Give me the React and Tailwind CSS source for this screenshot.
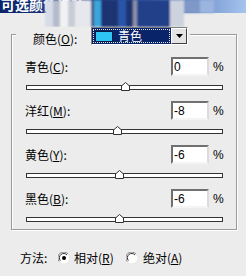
import React from "react";

const rows = [
  { label: "青色", key: "C", value: "0", v: 0 },
  { label: "洋红", key: "M", value: "-8", v: -8 },
  { label: "黄色", key: "Y", value: "-6", v: -6 },
  { label: "黑色", key: "B", value: "-6", v: -6 },
];

function Thumb() {
  return (
    <svg width="9" height="9" viewBox="0 0 9 9">
      <path d="M0.5 8.5 V4 L4.5 0.5 L8.5 4 V8.5 Z" fill="#fff" stroke="#303030" strokeWidth="1" />
    </svg>
  );
}

function Radio({ checked }) {
  return (
    <svg width="12" height="12" viewBox="0 0 12 12" className="shrink-0">
      <circle cx="6" cy="6" r="5.5" fill="#fff" />
      <path d="M10 2 A5.5 5.5 0 0 0 1.2 9.5" fill="none" stroke="#808080" strokeWidth="1" />
      <path d="M9 3 A4.2 4.2 0 0 0 2.4 8.6" fill="none" stroke="#303030" strokeWidth="1" />
      <path d="M10.4 2.6 A5.5 5.5 0 0 1 2 10.6" fill="none" stroke="#e6e6e6" strokeWidth="1" />
      {checked && <circle cx="6" cy="6" r="2" fill="#000" />}
    </svg>
  );
}

function Slider({ v }) {
  const left = ((v + 100) / 200) * 197 - 4.5;
  return (
    <div className="relative ml-[14px] mt-[9px] h-[5px] w-[197px] border border-[#333] bg-white">
      <div className="absolute top-[-4px]" style={{ left: `${left}px` }}>
        <Thumb />
      </div>
    </div>
  );
}

export default function App() {
  return (
    <div className="relative h-[276px] w-[246px] overflow-hidden bg-[#ececec] font-['Noto_Sans_CJK_SC',sans-serif] text-[12px] leading-[14px] text-black">
      {/* title bar */}
      <div className="h-[13px] overflow-hidden bg-gradient-to-r from-[#0a246a] via-[#2a4a98] to-[#a6c4ee]">
        <div className="-mt-[4px] whitespace-nowrap pl-[1px] text-[14px] font-bold leading-[17px] text-white">可选颜色选项</div>
      </div>
      {/* blurred artefact */}
      <svg className="absolute left-0 top-0" width="246" height="28" viewBox="0 0 246 28">
        <defs>
          <filter id="bl" x="-10%" y="-30%" width="120%" height="160%">
            <feGaussianBlur stdDeviation="1.3" />
          </filter>
        </defs>
        <g filter="url(#bl)">
          <rect x="45" y="0" width="8" height="27" fill="#d8dce8" />
          <rect x="53" y="0" width="7" height="27" fill="#b4bccc" />
          <rect x="60" y="0" width="8" height="27" fill="#f2f2f4" />
          <rect x="68" y="0" width="7" height="27" fill="#c8ccd6" />
          <rect x="75" y="0" width="16" height="27" fill="#e6e8ee" />
          <rect x="91" y="0" width="3" height="27" fill="#405080" />
          <rect x="94" y="0" width="7" height="27" fill="#3aa6dc" />
          <rect x="101" y="0" width="6" height="27" fill="#1e3272" />
          <rect x="107" y="0" width="26" height="27" fill="#1c3472" />
          <rect x="118" y="0" width="8" height="27" fill="#2a55a8" />
          <rect x="133" y="0" width="4" height="27" fill="#8a92a8" />
          <rect x="137" y="0" width="33" height="27" fill="#22408a" />
          <rect x="170" y="0" width="14" height="27" fill="#cdd3de" />
          <rect x="184" y="0" width="16" height="13" fill="#7f98c8" />
          <rect x="200" y="0" width="14" height="13" fill="#9cb4e0" />
        </g>
      </svg>

      {/* group box */}
      <div className="relative ml-[11px] mt-[21px] w-[226px] border border-[#9a9a9a] pb-[7px] shadow-[inset_1px_1px_0_#fff,1px_1px_0_#fff]">
        <div className="-mt-[8px] ml-[4px] flex h-[17px] w-[174px] items-start bg-[#ececec]">
          <div className="w-[75px] shrink-0 whitespace-nowrap pl-[17px] pt-[5px]">
            颜色(<span className="underline">O</span>):
          </div>
          <div className="flex h-[18px] w-[97px] shrink-0 border border-t-[#808080] border-l-[#808080] border-b-[#fff] border-r-[#fff] bg-white">
            <div className="flex flex-1 items-center bg-[#0a246a] p-[1px]">
              <div className="flex h-full w-full items-center border border-dotted border-[#e0e0e0]">
                <div className="ml-[1px] h-[11px] w-[18px] border border-[#0a1a40] bg-[#2ec4f4]" />
                <span className="ml-[5px] whitespace-nowrap text-white">青色</span>
              </div>
            </div>
            <div className="flex w-[16px] items-center justify-center border border-t-[#fff] border-l-[#fff] border-b-[#404040] border-r-[#404040] bg-[#e4e4e4]">
              <svg width="7" height="4" viewBox="0 0 7 4">
                <path d="M0 0 H7 L3.5 4 Z" fill="#000" />
              </svg>
            </div>
          </div>
        </div>

        <div className="mt-[13px] flex flex-col gap-[11px]">
          {rows.map((r) => (
            <div key={r.key}>
              <div className="flex h-[19px] items-center pl-[13px]">
                <div className="w-[146px] whitespace-nowrap pt-[1px]">
                  {r.label}(<span className="underline">{r.key}</span>):
                </div>
                <div className="flex h-[19px] w-[38px] items-center border-2 border-t-[#707070] border-l-[#707070] border-b-[#f4f4f4] border-r-[#dcdcdc] bg-white pl-[1px] font-['Liberation_Sans',sans-serif] text-[12px]">
                  {r.value}
                </div>
                <span className="ml-[4px] font-['Liberation_Sans',sans-serif] text-[12px]">%</span>
              </div>
              <Slider v={r.v} />
            </div>
          ))}
        </div>
      </div>

      {/* method */}
      <div className="mt-[21px] flex h-[14px] items-center whitespace-nowrap pl-[20px]">
        <span className="w-[38px]">方法:</span>
        <Radio checked />
        <span className="ml-[4px] w-[52px]">
          相对(<span className="underline">R</span>)
        </span>
        <Radio />
        <span className="ml-[5px]">
          绝对(<span className="underline">A</span>)
        </span>
      </div>
    </div>
  );
}
